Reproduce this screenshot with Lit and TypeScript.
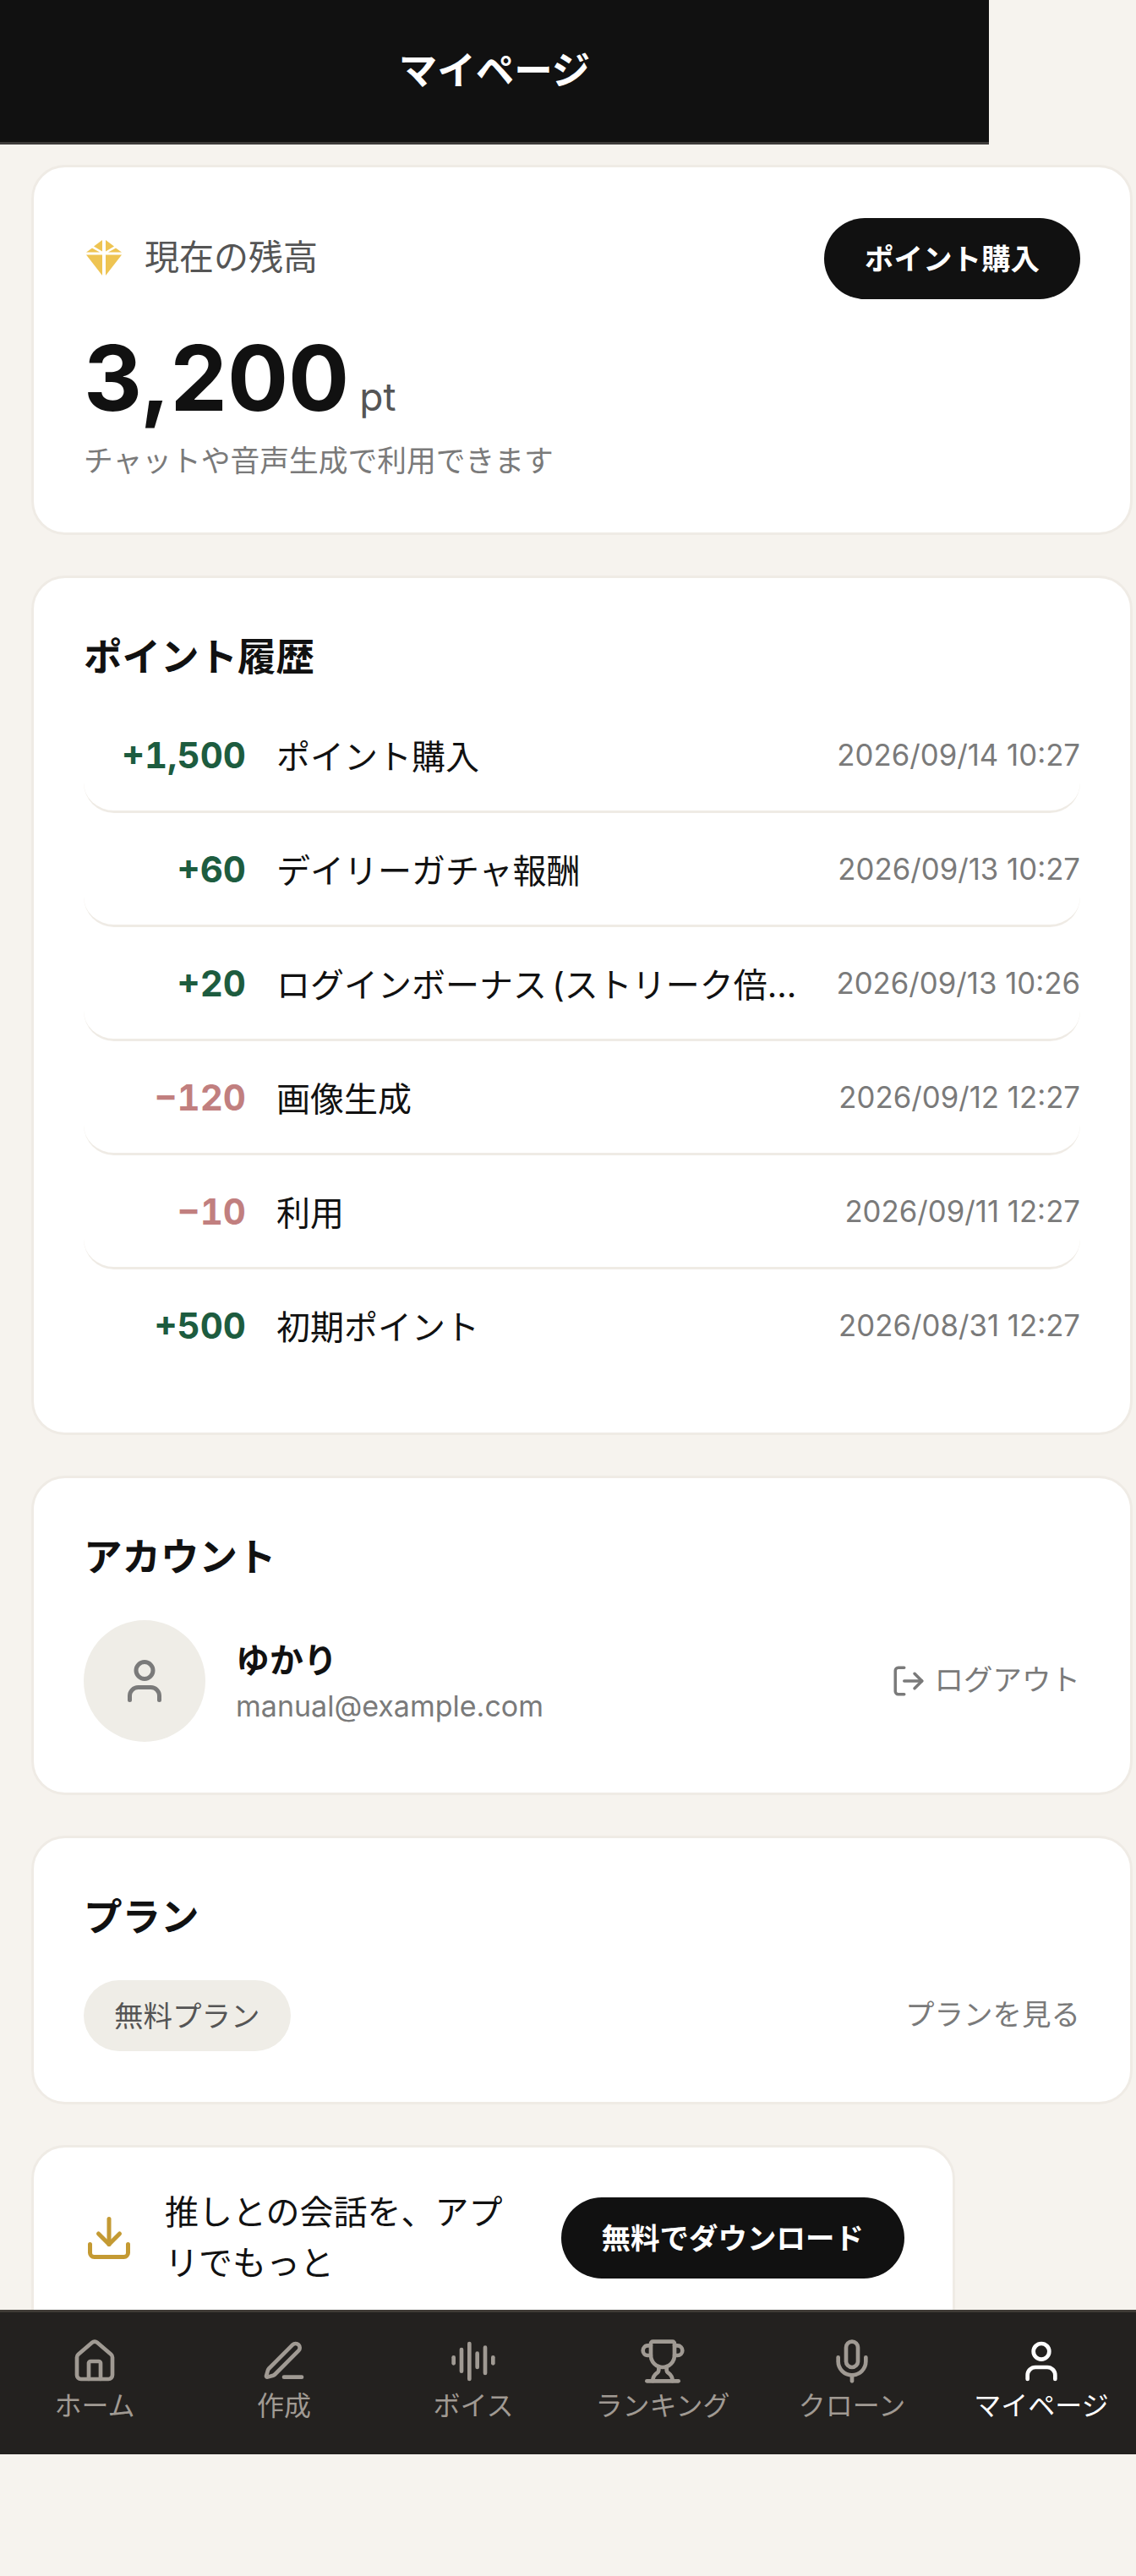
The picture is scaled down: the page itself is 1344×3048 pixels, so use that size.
import { LitElement, html, css, svg } from 'lit';
import { customElement } from 'lit/decorators.js';

const icons = {
  house: svg`<path d="M15 21v-8a1 1 0 0 0-1-1h-4a1 1 0 0 0-1 1v8"/><path d="M3 10a2 2 0 0 1 .709-1.528l7-5.999a2 2 0 0 1 2.582 0l7 5.999A2 2 0 0 1 21 10v9a2 2 0 0 1-2 2H5a2 2 0 0 1-2-2z"/>`,
  pen: svg`<path d="M12 20h9"/><path d="M16.376 3.622a1 1 0 0 1 3.002 3.002L7.368 18.635a2 2 0 0 1-.855.506l-2.872.838a.5.5 0 0 1-.62-.62l.838-2.872a2 2 0 0 1 .506-.854z"/>`,
  audio: svg`<path d="M2 10v3"/><path d="M6 6v11"/><path d="M10 3v18"/><path d="M14 8v7"/><path d="M18 5v13"/><path d="M22 10v3"/>`,
  trophy: svg`<path d="M10 14.66v1.626a2 2 0 0 1-.976 1.696A5 5 0 0 0 7 21.978"/><path d="M14 14.66v1.626a2 2 0 0 0 .976 1.696A5 5 0 0 1 17 21.978"/><path d="M18 9h1.5a1 1 0 0 0 0-5H18"/><path d="M4 22h16"/><path d="M6 9a6 6 0 0 0 12 0V3a1 1 0 0 0-1-1H7a1 1 0 0 0-1 1z"/><path d="M6 9H4.5a1 1 0 0 1 0-5H6"/>`,
  mic: svg`<path d="M12 19v3"/><path d="M19 10v2a7 7 0 0 1-14 0v-2"/><rect x="9" y="2" width="6" height="13" rx="3"/>`,
  user: svg`<path d="M19 21v-2a4 4 0 0 0-4-4H9a4 4 0 0 0-4 4v2"/><circle cx="12" cy="7" r="4"/>`,
  logout: svg`<path d="m16 17 5-5-5-5"/><path d="M21 12H9"/><path d="M9 21H5a2 2 0 0 1-2-2V5a2 2 0 0 1 2-2h4"/>`,
  download: svg`<path d="M12 15V3"/><path d="M21 15v4a2 2 0 0 1-2 2H5a2 2 0 0 1-2-2v-4"/><path d="m7 10 5 5 5-5"/>`,
};

const icon = (name: keyof typeof icons, cls: string) => html`<svg
  class=${cls}
  viewBox="0 0 24 24"
  fill="none"
  stroke="currentColor"
  stroke-width="2"
  stroke-linecap="round"
  stroke-linejoin="round"
>${icons[name]}</svg>`;

const history = [
  { amount: '+1,500', label: 'ポイント購入', date: '2026/09/14 10:27' },
  { amount: '+60', label: 'デイリーガチャ報酬', date: '2026/09/13 10:27' },
  { amount: '+20', label: 'ログインボーナス (ストリーク倍率適用)', date: '2026/09/13 10:26' },
  { amount: '−120', label: '画像生成', date: '2026/09/12 12:27' },
  { amount: '−10', label: '利用', date: '2026/09/11 12:27' },
  { amount: '+500', label: '初期ポイント', date: '2026/08/31 12:27' },
];

const tabs: { name: keyof typeof icons; label: string; active?: boolean }[] = [
  { name: 'house', label: 'ホーム' },
  { name: 'pen', label: '作成' },
  { name: 'audio', label: 'ボイス' },
  { name: 'trophy', label: 'ランキング' },
  { name: 'mic', label: 'クローン' },
  { name: 'user', label: 'マイページ', active: true },
];

@customElement('app-root')
export class AppRoot extends LitElement {
  static styles = css`
    :host {
      display: block;
      height: 3048px;
      background: #f6f3ee;
      color: #111;
      font-family: Inter, 'Noto Sans CJK JP', sans-serif;
    }

    .header {
      box-sizing: border-box;
      width: 1170px;
      height: 171px;
      padding-bottom: 8px;
      display: flex;
      align-items: center;
      justify-content: center;
      background: #111;
      border-bottom: 3px solid #3e3c3a;
      color: #fff;
      font-size: 45.5px;
      font-weight: 700;
    }

    .main {
      box-sizing: border-box;
      height: 2562px;
      overflow: hidden;
      padding: 24px 0 0 37px;
      display: flex;
      flex-direction: column;
      align-items: flex-start;
      gap: 48px;
    }

    .card {
      box-sizing: border-box;
      flex: none;
      width: 1303px;
      padding: 60px 59px 60px 59px;
      background: #fff;
      border: 3px solid #efebe5;
      border-radius: 40px;
    }

    .title {
      height: 68px;
      margin-bottom: 40px;
      font-size: 45.5px;
      font-weight: 700;
      line-height: 68px;
    }

    .btn {
      box-sizing: border-box;
      flex: none;
      height: 96px;
      padding: 0 48px 4px;
      display: flex;
      align-items: center;
      background: #111;
      border-radius: 48px;
      color: #fff;
      font-size: 34.5px;
      font-weight: 700;
    }

    .balance {
      padding-bottom: 59px;
    }

    .balance-top {
      display: flex;
      align-items: center;
      justify-content: space-between;
    }

    .balance-label {
      display: flex;
      align-items: center;
      gap: 26px;
      margin-top: -10px;
      color: #555;
      font-size: 41px;
    }

    .gem {
      width: 44px;
      height: 42px;
      margin: 8px 0 0 2px;
    }

    .amount {
      margin-top: 34px;
      display: flex;
      align-items: baseline;
      gap: 12px;
      font-size: 107px;
      font-weight: 700;
      line-height: 118px;
    }

    .amount span {
      color: #555;
      font-size: 46px;
      font-weight: 400;
      line-height: 1;
    }

    .sub {
      margin-top: 13px;
      color: #7a7a7a;
      font-size: 34.75px;
      line-height: 52px;
    }

    .history {
      padding-bottom: 58px;
    }

    .history .title {
      margin-bottom: 15px;
    }

    .row {
      box-sizing: border-box;
      height: 135px;
      display: flex;
      align-items: center;
      gap: 36px;
      border-bottom: 3px solid #efebe5;
      border-radius: 36px;
    }

    .row:last-child {
      border-bottom-color: transparent;
    }

    .points {
      flex: none;
      width: 192px;
      text-align: right;
      font-size: 42px;
      font-weight: 700;
      font-variant-numeric: tabular-nums;
    }

    .plus {
      color: #1d5c3f;
    }

    .minus {
      color: #c17f7f;
    }

    .label {
      flex: 1;
      min-width: 0;
      overflow: hidden;
      white-space: nowrap;
      text-overflow: ellipsis;
      font-size: 40px;
      word-spacing: -5px;
    }

    .date {
      flex: none;
      color: #7a7a7a;
      font-size: 34.75px;
    }

    .between {
      display: flex;
      align-items: center;
      justify-content: space-between;
    }

    .person {
      display: flex;
      align-items: center;
      gap: 36px;
    }

    .avatar {
      width: 144px;
      height: 144px;
      display: flex;
      align-items: center;
      justify-content: center;
      background: #efede7;
      border-radius: 50%;
      color: #7a7a7a;
    }

    .avatar-icon {
      width: 60px;
      height: 60px;
    }

    .info {
      margin-top: 4px;
    }

    .name {
      font-size: 40px;
      font-weight: 700;
      line-height: 54px;
    }

    .email {
      margin-top: 2px;
      color: #7a7a7a;
      font-size: 34px;
      line-height: 50px;
    }

    .muted-link {
      display: flex;
      align-items: center;
      gap: 10px;
      padding-bottom: 8px;
      color: #7a7a7a;
      font-size: 34.5px;
    }

    .logout-icon {
      width: 42px;
      height: 42px;
      margin-top: 8px;
    }

    .pill {
      box-sizing: border-box;
      height: 84px;
      padding: 0 36px 4px;
      display: flex;
      align-items: center;
      background: #efede7;
      border-radius: 42px;
      color: #555;
      font-size: 34.5px;
    }

    .promo {
      width: 1093px;
      padding-top: 47px;
      padding-right: 57px;
      display: flex;
      align-items: center;
      gap: 36px;
    }

    .download-icon {
      flex: none;
      width: 60px;
      height: 60px;
      color: #c49a33;
    }

    .promo-text {
      flex: 1;
      font-size: 40px;
      line-height: 60px;
    }

    .nav {
      box-sizing: border-box;
      height: 171px;
      padding-top: 30px;
      display: grid;
      grid-template-columns: repeat(6, 1fr);
      align-items: start;
      background: #23211f;
      border-top: 3px solid #3f3b36;
    }

    .tab {
      display: flex;
      flex-direction: column;
      align-items: center;
      gap: 6px;
      color: #a09a93;
      font-size: 32px;
      line-height: 38px;
    }

    .tab.active {
      color: #fff;
    }

    .tab-icon {
      width: 56px;
      height: 56px;
    }
  `;

  render() {
    return html`
      <div class="header">マイページ</div>
      <div class="main">
        <section class="card balance">
          <div class="balance-top">
            <div class="balance-label">
              <svg class="gem" viewBox="0 0 44 42" fill="#eec452">
                <path d="M20 0v13.5L10 7.5z" />
                <path d="M24 0v13.5l10-6z" />
                <path d="M1 14.5 8 9.5l9 5z" />
                <path d="M43 14.5 36 9.5l-9 5z" />
                <path d="M1 17.5h19V42z" />
                <path d="M43 17.5H24V42z" />
              </svg>
              現在の残高
            </div>
            <div class="btn">ポイント購入</div>
          </div>
          <div class="amount">3,200<span>pt</span></div>
          <div class="sub">チャットや音声生成で利用できます</div>
        </section>

        <section class="card history">
          <div class="title">ポイント履歴</div>
          <div>
            ${history.map(
              (h) => html`
                <div class="row">
                  <div class="points ${h.amount.startsWith('+') ? 'plus' : 'minus'}">${h.amount}</div>
                  <div class="label">${h.label}</div>
                  <div class="date">${h.date}</div>
                </div>
              `
            )}
          </div>
        </section>

        <section class="card">
          <div class="title">アカウント</div>
          <div class="between">
            <div class="person">
              <div class="avatar">${icon('user', 'avatar-icon')}</div>
              <div class="info">
                <div class="name">ゆかり</div>
                <div class="email">manual@example.com</div>
              </div>
            </div>
            <div class="muted-link">${icon('logout', 'logout-icon')}ログアウト</div>
          </div>
        </section>

        <section class="card">
          <div class="title">プラン</div>
          <div class="between">
            <div class="pill">無料プラン</div>
            <div class="muted-link">プランを見る</div>
          </div>
        </section>

        <section class="card promo">
          ${icon('download', 'download-icon')}
          <div class="promo-text">推しとの会話を、アプリでもっと</div>
          <div class="btn">無料でダウンロード</div>
        </section>
      </div>
      <nav class="nav">
        ${tabs.map(
          (t) => html`
            <div class="tab ${t.active ? 'active' : ''}">
              ${icon(t.name, 'tab-icon')}
              <span>${t.label}</span>
            </div>
          `
        )}
      </nav>
    `;
  }
}
